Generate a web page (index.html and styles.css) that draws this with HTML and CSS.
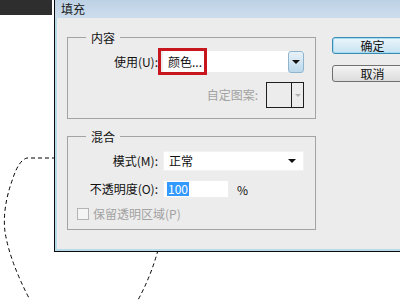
FILE: index.html
```html
<!DOCTYPE html>
<html>
<head>
<meta charset="utf-8">
<link rel="stylesheet" href="styles.css">
</head>
<body>
<div class="screen">
  <div class="topbar"></div>
  <svg class="marquee" width="400" height="300" viewBox="0 0 400 300">
    <path d="M56 158 L27 158 Q19 160 13 178 Q2 208 5 232 Q10 262 30 300" />
    <path d="M158 250 Q151 276 138 300" />
  </svg>
  <div class="dialog">
    <div class="titlebar">填充</div>
    <div class="frame">
      <div class="body">
        <div class="left">
          <div class="group g1">
            <span class="group-title">内容</span>
            <div class="row">
              <span class="lbl">使用(U):</span>
              <div class="select s1">
                <span class="val">颜色...</span>
                <span class="dd-btn"><span class="tri"></span></span>
                <span class="highlight"></span>
              </div>
            </div>
            <div class="row row-pattern">
              <span class="lbl-dim">自定图案:</span>
              <div class="pattern"><span class="swatch"></span><span class="pat-arrow"><span class="tri tri-dim"></span></span></div>
            </div>
          </div>
          <div class="group g2">
            <span class="group-title">混合</span>
            <div class="row">
              <span class="lbl">模式(M):</span>
              <div class="select s2">
                <span class="val">正常</span>
                <span class="tri tri-plain"></span>
              </div>
            </div>
            <div class="row">
              <span class="lbl">不透明度(O):</span>
              <div class="input"><span class="sel-text">100</span></div>
              <span class="pct">%</span>
            </div>
            <div class="row row-check">
              <span class="checkbox"></span>
              <span class="lbl-dim">保留透明区域(P)</span>
            </div>
          </div>
        </div>
        <div class="right">
          <div class="btn btn-default">确定</div>
          <div class="btn">取消</div>
        </div>
      </div>
    </div>
  </div>
</div>
</body>
</html>
```
FILE: styles.css
```css
* { box-sizing: border-box; }
html, body { margin: 0; padding: 0; }
body {
  width: 400px;
  height: 300px;
  overflow: hidden;
  background: #ffffff;
  font-family: "Noto Sans CJK SC", "Noto Sans", sans-serif;
  font-size: 12px;
  color: #111;
}
.screen {
  position: relative;
  width: 400px;
  height: 300px;
  overflow: hidden;
}
.topbar {
  position: absolute;
  left: 0;
  top: 0;
  width: 52px;
  height: 15px;
  background: #2e2e2e;
}
.marquee {
  position: absolute;
  left: 0;
  top: 0;
}
.marquee path {
  fill: none;
  stroke: #000;
  stroke-width: 1;
  stroke-dasharray: 4 3;
}
.dialog {
  position: absolute;
  left: 54px;
  top: 0;
  width: 370px;
  height: 252px;
  border-left: 1px solid #0a0a0a;
  border-bottom: 1px solid #0a0a0a;
  display: flex;
  flex-direction: column;
  background: #a9d3e3;
}
.titlebar {
  height: 18px;
  line-height: 17px;
  padding-left: 6px;
  background: linear-gradient(#bcd2e4, #cddded);
  color: #1a1a1a;
}
.frame {
  flex: 1;
  display: flex;
  padding: 0 0 2px 2px;
  background: #b7dbe8;
}
.body {
  flex: 1;
  background: #ececec;
  display: flex;
  padding: 19px 0 0 10px;
  gap: 16px;
}
.left {
  width: 249px;
  display: flex;
  flex-direction: column;
  gap: 17px;
}
.group {
  position: relative;
  border: 1px solid #a3a3a3;
  padding-right: 11px;
  display: flex;
  flex-direction: column;
}
.g1 { height: 82px; padding-top: 13px; gap: 10px; }
.g2 { height: 94px; padding-top: 14px; gap: 9px; }
.group-title {
  position: absolute;
  top: -9px;
  left: 18px;
  padding: 0 5px;
  line-height: 17px;
  background: #ececec;
}
.row {
  display: flex;
  align-items: center;
  gap: 5px;
}
.lbl {
  width: 90px;
  text-align: right;
  line-height: 16px;
  white-space: nowrap;
}
.lbl-dim {
  color: #a2a2a2;
  line-height: 16px;
  white-space: nowrap;
}
.select {
  position: relative;
  width: 141px;
  background: #fff;
  display: flex;
  align-items: center;
}
.s1 { height: 21px; }
.s2 { height: 20px; border: 1px solid #f2f2f2; }
.val { flex: 1; padding-left: 5px; line-height: 16px; }
.dd-btn {
  width: 16px;
  height: 22px;
  border: 1px solid #8fb4cf;
  border-radius: 3px;
  background: linear-gradient(#e8f2f9, #bcd8ea);
  display: flex;
  align-items: center;
  justify-content: center;
}
.tri {
  width: 0;
  height: 0;
  border-left: 4px solid transparent;
  border-right: 4px solid transparent;
  border-top: 4px solid #111;
}
.tri-plain { margin-right: 7px; }
.tri-dim {
  border-left-width: 3px;
  border-right-width: 3px;
  border-top: 3px solid #b0b0b0;
}
.highlight {
  position: absolute;
  left: -5px;
  top: -3px;
  width: 49px;
  height: 27px;
  border: 3px solid #c8161f;
}
.row-pattern {
  justify-content: flex-end;
  gap: 8px;
  height: 26px;
}
.pattern {
  width: 38px;
  height: 26px;
  border: 1px solid #1e1e1e;
  display: flex;
}
.swatch {
  width: 25px;
  border-right: 1px solid #1e1e1e;
}
.pat-arrow {
  flex: 1;
  display: flex;
  align-items: center;
  justify-content: center;
}
.input {
  width: 66px;
  height: 18px;
  background: #fff;
  border: 1px solid #eeeeee;
  padding-left: 3px;
  display: flex;
  align-items: center;
}
.sel-text {
  background: #3399ff;
  color: #fff;
  line-height: 14px;
  padding: 0 1px;
}
.pct { margin-left: 3px; }
.row-check {
  height: 16px;
  padding-left: 9px;
  gap: 4px;
  margin-top: -1px;
}
.checkbox {
  width: 12px;
  height: 12px;
  border: 1px solid #b4b4b4;
  background: #f4f4f4;
}
.right {
  display: flex;
  flex-direction: column;
  gap: 11px;
}
.btn {
  width: 83px;
  height: 17px;
  border: 1px solid #707070;
  border-radius: 3px;
  background: linear-gradient(#f4f4f4, #dcdcdc);
  text-align: center;
  line-height: 15px;
  padding-right: 2px;
}
.btn-default {
  border-color: #3c8bb3;
  background: linear-gradient(#eaf5fb, #c8e3f1);
  box-shadow: inset 0 0 0 1px #a6dcf2;
}
```
